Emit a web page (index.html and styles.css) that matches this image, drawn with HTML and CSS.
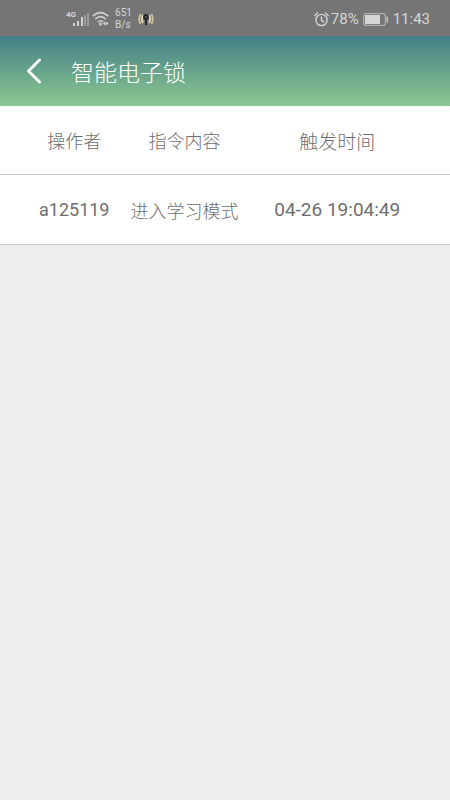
FILE: index.html
```html
<!DOCTYPE html>
<html lang="zh-CN">
<head>
<meta charset="utf-8">
<meta name="viewport" content="width=device-width, initial-scale=1">
<title>智能电子锁</title>
<link rel="stylesheet" href="styles.css">
</head>
<body>
<div class="status">
  <div class="status-group">
    <span class="network">4G</span>
    <svg class="signal" width="16" height="16" viewBox="0 0 16 16" aria-hidden="true">
      <path fill="#d2d2d2" d="M0 12h2v3H0zM4 10h2v5H4zM8 6h2v9H8z"/>
      <path fill="#9c9c9c" d="M11 4h2v11h-2zM14 2h2v13h-2z"/>
    </svg>
    <svg class="wifi" width="18" height="16" viewBox="0 0 18 16" fill="none" stroke="#d2d2d2" stroke-width="1.6" aria-hidden="true">
      <path d="M.8 5.200Q8.500-2 16.200 5.200M3.300 8.200Q8.500 3.200 13.700 8.200M5.800 11Q8.500 8.500 11.200 11"/>
      <circle cx="8.500" cy="13" r="1.500" fill="#d2d2d2" stroke="none"/>
      <path fill="#d2d2d2" stroke="none" d="M10.600 12.500l2.700-2v4zM16.600 12.500l-2.700-2v4z"/>
    </svg>
    <span class="speed">651<br>B/s</span>
    <svg class="beacon" width="16" height="14" viewBox="0 0 16 14" fill="none" aria-hidden="true">
      <path stroke="#cfc596" stroke-width="1.800" d="M2.600 2Q-.2 7 2.600 12M13.400 2Q16.200 7 13.400 12"/>
      <path stroke="#e6dfba" stroke-width="1.800" d="M5 3Q2.800 7 5 11M11 3Q13.200 7 11 11"/>
      <circle cx="8" cy="5" r="2.900" fill="#292929"/>
      <path stroke="#292929" stroke-width="2" d="M8 6v7"/>
      <circle cx="8" cy="5" r=".8" fill="#8b8b8b"/>
    </svg>
  </div>
  <div class="status-group status-right">
    <svg width="15" height="15" viewBox="0 0 15 15" fill="none" stroke="#d6d6d6" stroke-width="1.400" stroke-linecap="round" aria-hidden="true">
      <circle cx="7.500" cy="8" r="5.600"/>
      <path d="M7.500 5v3.300l2.200 1.500M.8 3.500L3.500 1M14.200 3.500L11.500 1"/>
    </svg>
    <span class="percent">78%</span>
    <svg class="battery" width="26" height="13" viewBox="0 0 26 13" fill="none" aria-hidden="true">
      <rect x=".7" y=".7" width="21.600" height="11.600" rx="2" stroke="#b0b0b0" stroke-width="1.200"/>
      <path fill="#d6d6d6" d="M2 2h15v9H2z"/>
      <path fill="#c6c6c6" d="M23.500 3.500H25v6h-1.500z"/>
    </svg>
    <time>11:43</time>
  </div>
</div>
<header class="bar">
  <button class="back" type="button" aria-label="返回">
    <svg width="16" height="26" viewBox="0 0 16 26" fill="none" stroke="#fff" stroke-width="3" stroke-linecap="round" stroke-linejoin="round" aria-hidden="true"><path d="M13.500 2L2.500 13l11 11"/></svg>
  </button>
  <h1>智能电子锁</h1>
</header>
<main>
  <table class="log">
    <thead>
      <tr><th class="user" scope="col">操作者</th><th class="command" scope="col">指令内容</th><th class="when" scope="col">触发时间</th></tr>
    </thead>
    <tbody>
      <tr><td class="user">a125119</td><td class="command">进入学习模式</td><td class="when">04-26 19:04:49</td></tr>
    </tbody>
  </table>
</main>
</body>
</html>
```
FILE: styles.css
```css
* { box-sizing: border-box; }

body {
  margin: 0;
  min-height: 100vh;
  background: #ededed;
  color: #6e6e6e;
  font-family: Roboto, "Noto Sans CJK SC", sans-serif;
}

.status {
  display: flex;
  align-items: center;
  justify-content: space-between;
  height: 36px;
  padding: 2px 20px 0 66px;
  background: #757575;
  color: #d6d6d6;
  font-size: 15px;
}

.status-group { display: flex; align-items: center; }

.network {
  align-self: flex-start;
  margin-right: -3px;
  font-size: 8px;
  font-weight: 700;
  line-height: 16px;
}

.wifi { margin-left: 3px; }

.speed {
  margin: 0 6px 0 5px;
  font-size: 10px;
  line-height: 12px;
}

.percent { margin: 0 4px 0 2px; }

.battery { margin-right: 4px; }

.bar {
  display: flex;
  align-items: center;
  height: 70px;
  padding-left: 16px;
  background: linear-gradient(#437f86, #8cc890);
  color: #fff;
}

.back {
  display: flex;
  align-items: center;
  justify-content: center;
  width: 36px;
  height: 44px;
  padding: 0;
  border: 0;
  background: none;
}

.bar h1 {
  margin: 0 0 0 19px;
  font-size: 23px;
  font-weight: 300;
}

.log {
  width: 100%;
  table-layout: fixed;
  border-collapse: separate;
  border-spacing: 0;
  background: #fff;
  font-size: 18px;
  text-align: center;
}

.log th,
.log td {
  height: 69px;
  padding: 0;
  border-bottom: 1px solid #c8c8c8;
  font-weight: 300;
  white-space: nowrap;
}

.log td { height: 70px; }

.log .user { width: 29%; padding-left: 18px; }
.log .command { width: 24%; }
.log .when { padding-right: 14px; font-size: 19px; }

.log td.user,
.log td.when { font-weight: 400; }
```
